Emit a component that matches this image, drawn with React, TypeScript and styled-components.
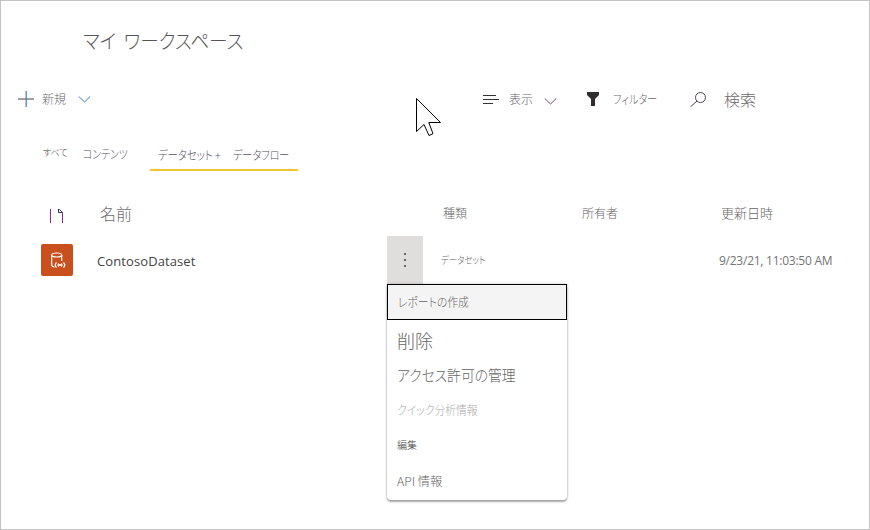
import React from 'react';
import styled, { createGlobalStyle } from 'styled-components';

const GlobalStyle = createGlobalStyle`
  * { box-sizing: border-box; }
  body { margin: 0; background: #fff; }
`;

const Window = styled.main`
  width: 870px;
  height: 530px;
  border: 1px solid #c3c3c3;
  background: #fff;
  overflow: hidden;
  font-family: 'Open Sans', 'Noto Sans CJK JP', sans-serif;
`;

interface LabelProps {
  $size: number;
  $color?: string;
  $width?: number;
  $condense?: number;
  $shift?: number;
  $indent?: number;
  $wordGap?: number;
}

const Label = styled.span<LabelProps>`
  display: block;
  flex: none;
  width: ${p => (p.$width ? `${p.$width}px` : 'auto')};
  height: 20px;
  line-height: 20px;
  transform: translate(${p => p.$indent ?? 0}px, ${p => p.$shift ?? 0}px) scaleX(${p => p.$condense ?? 1});
  transform-origin: left center;
  font-family: 'Noto Sans CJK JP', sans-serif;
  font-weight: 300;
  font-size: ${p => p.$size}px;
  font-feature-settings: 'palt';
  word-spacing: ${p => p.$wordGap ?? 0}px;
  color: ${p => p.$color ?? '#666'};
  white-space: nowrap;
`;

const Title = styled.h1`
  margin: 0;
  height: 79px;
  padding: 30px 0 0 82px;
`;

const Toolbar = styled.header`
  display: flex;
  align-items: center;
  height: 38px;
  padding-left: 17px;
  svg { flex: none; }
`;

const Action = styled.div<{ $width: number; $gap: number }>`
  display: flex;
  align-items: center;
  flex: none;
  width: ${p => p.$width}px;
  gap: ${p => p.$gap}px;
`;

const Pointer = styled.svg`
  margin: 38px 41px 0 0;
`;

const Tabs = styled.nav`
  display: flex;
  height: 53px;
  padding: 24px 0 0 41px;
`;

const Tab = styled.div<{ $width: number; $active?: boolean }>`
  display: flex;
  flex: none;
  width: ${p => p.$width}px;
  height: 29px;
  padding-left: ${p => (p.$active ? 8 : 1)}px;
  border-bottom: ${p => (p.$active ? '2px solid #f2c62f' : 'none')};
`;

const Row = styled.div<{ $height: number }>`
  display: grid;
  grid-template-columns: 56px 290px 56px 139px 138px 150px;
  align-items: center;
  height: ${p => p.$height}px;
  padding-left: 40px;
`;

const Table = styled.div`
  padding-top: 20px;
`;

const DatasetTile = styled.div`
  width: 32px;
  height: 32px;
  border-radius: 2px;
  background: #c94f1d;
`;

const Latin = styled.span<{ $size: number; $color: string; $spacing: number; $outdent?: number }>`
  font: 400 ${p => p.$size}px/20px 'Open Sans', sans-serif;
  letter-spacing: ${p => p.$spacing}px;
  color: ${p => p.$color};
  margin-left: ${p => -(p.$outdent ?? 0)}px;
  padding-top: 2px;
  white-space: nowrap;
`;

const MoreCell = styled.div`
  position: relative;
  width: 36px;
  height: 48px;
  background: #dfdedd;
`;

const MoreDots = styled.svg`
  display: block;
`;

const Menu = styled.div`
  position: absolute;
  top: 48px;
  left: 0;
  width: 180px;
  height: 216px;
  border-radius: 2px 2px 4px 4px;
  background: #fff;
  box-shadow: 0 2px 2px rgba(0, 0, 0, 0.3), 0 0 2px 1px rgba(0, 0, 0, 0.12);
`;

const MenuItem = styled.div<{ $height: number; $focused?: boolean }>`
  display: flex;
  align-items: center;
  height: ${p => p.$height}px;
  padding-left: 10px;
  border: ${p => (p.$focused ? '1px solid #000' : 'none')};
  background: ${p => (p.$focused ? '#f4f4f4' : 'transparent')};
`;

const Chevron = ({ color, drop = 0 }: { color: string; drop?: number }) => (
  <svg width="13" height="12" viewBox={`0 ${-2 - drop} 13 12`} fill="none" stroke={color} strokeWidth="1">
    <path d="M.8 1.5 6.5 7 12.2 1.5" />
  </svg>
);

const menuItems = [
  { text: 'レポートの作成', size: 12, height: 36, focused: true, condense: 0.9 },
  { text: '削除', size: 18, height: 41, shift: -1 },
  { text: 'アクセス許可の管理', size: 15, height: 30, condense: 0.92, shift: -1 },
  { text: 'クイック分析情報', size: 12, height: 38, color: '#aaa', condense: 0.9 },
  { text: '編集', size: 10, height: 31, color: '#444' },
  { text: 'API 情報', size: 12, height: 42, condense: 1.02 },
];

export default function App() {
  return (
    <Window>
      <GlobalStyle />
      <Title>
        <Label $size={20} $color="#555" $condense={0.93} $wordGap={4}>マイ ワークスペース</Label>
      </Title>

      <Toolbar>
        <Action $width={398} $gap={8}>
          <svg width="16" height="16" viewBox="0 0 16 16" fill="none">
            <path d="M8.5 0V16" stroke="#4ba0e0" />
            <path d="M7.5 0V16" stroke="#c3a58c" strokeOpacity=".7" />
            <path d="M0 8H16" stroke="#73777a" strokeWidth="1.4" />
          </svg>
          <Label $size={12} $color="#6b6671" $width={28}>新規</Label>
          <Chevron color="#3a80b8" />
        </Action>
        <Pointer width="26" height="40" viewBox="0 0 26 40" fill="#fff" stroke="#000">
          <path d="M.5 .5V33.5L8 26.5 13 37.5 17 35.7 12.8 24.5H24.5Z" />
        </Pointer>
        <Action $width={104} $gap={10}>
          <svg width="16" height="12" viewBox="0 0 16 12" stroke="#333">
            <path d="M0 2.5H13M0 6.5H16M0 10.5H10" />
          </svg>
          <Label $size={12} $color="#6b6671" $width={25}>表示</Label>
          <Chevron color="#7b4a72" drop={2} />
        </Action>
        <Action $width={103} $gap={14}>
          <svg width="12" height="14" viewBox="0 0 12 14" fill="#302e2d">
            <path d="M0 0H12V3L8 7V14H4V7L0 3Z" />
          </svg>
          <Label $size={12} $color="#6b6671" $width={46} $condense={0.84}>フィルター</Label>
        </Action>
        <Action $width={80} $gap={18}>
          <svg width="16" height="16" viewBox="0 -1 16 16" fill="none" stroke="#50445b">
            <circle cx="10.5" cy="5.5" r="5" />
            <path d="M7 9 .5 14.8" />
          </svg>
          <Label $size={16} $color="#6c6c6c">検索</Label>
        </Action>
      </Toolbar>

      <Tabs>
        <Tab $width={40}>
          <Label $size={9} $color="#505050" $shift={1}>すべて</Label>
        </Tab>
        <Tab $width={68}>
          <Label $size={12} $color="#555262" $shift={2} $condense={0.82}>コンテンツ</Label>
        </Tab>
        <Tab $width={148} $active>
          <Label $size={12} $color="#555262" $width={75} $shift={3} $condense={0.86}>データセット +</Label>
          <Label $size={12} $color="#555262" $shift={3} $condense={0.84}>データフロー</Label>
        </Tab>
      </Tabs>

      <Table>
        <Row $height={45}>
          <svg width="30" height="18" viewBox="-9 -1 30 18" fill="none" stroke="#82318c">
            <path d="M.5 3V17M12.5 7V17" />
            <path d="M8.5 3V6.5H12.5M8.5 3.5H9.5L12.5 6.5" stroke="#3b244f" />
          </svg>
          <Label $size={16} $color="#6c6c6c" $indent={3} $shift={-1}>名前</Label>
          <span />
          <Label $size={12} $shift={-1}>種類</Label>
          <Label $size={12} $shift={-1}>所有者</Label>
          <Label $size={13} $shift={-1} $indent={1}>更新日時</Label>
        </Row>
        <Row $height={48}>
          <DatasetTile>
            <svg width="32" height="32" viewBox="0 0 32 32" fill="none" stroke="#fff" strokeWidth="1.2">
              <ellipse cx="15.7" cy="11" rx="5" ry="2" />
              <path d="M10.7 11V21Q11 23 13.5 23M20.7 11V17" />
              <path d="M15.5 18.5Q13 21 15.5 23.5M17.7 19.5Q16.3 21 17.7 22.5M20.3 19.5Q21.7 21 20.3 22.5M22.5 18.5Q25 21 22.5 23.5" />
              <circle cx="19" cy="21" r=".5" />
            </svg>
          </DatasetTile>
          <Latin $size={13} $color="#444" $spacing={0.1}>ContosoDataset</Latin>
          <MoreCell>
            <MoreDots width="36" height="48" fill="#666">
              <path d="M17 17h2v2h-2zM17 23h2v2h-2zM17 29h2v2h-2z" />
            </MoreDots>
            <Menu>
              {menuItems.map(item => (
                <MenuItem key={item.text} $height={item.height} $focused={item.focused}>
                  <Label $size={item.size} $color={item.color} $condense={item.condense} $shift={item.shift}>
                    {item.text}
                  </Label>
                </MenuItem>
              ))}
            </Menu>
          </MoreCell>
          <Label $size={10} $color="#666" $condense={0.84} $indent={-2}>データセット</Label>
          <span />
          <Latin $size={12} $color="#747474" $spacing={-0.25} $outdent={1}>9/23/21, 11:03:50 AM</Latin>
        </Row>
      </Table>
    </Window>
  );
}
